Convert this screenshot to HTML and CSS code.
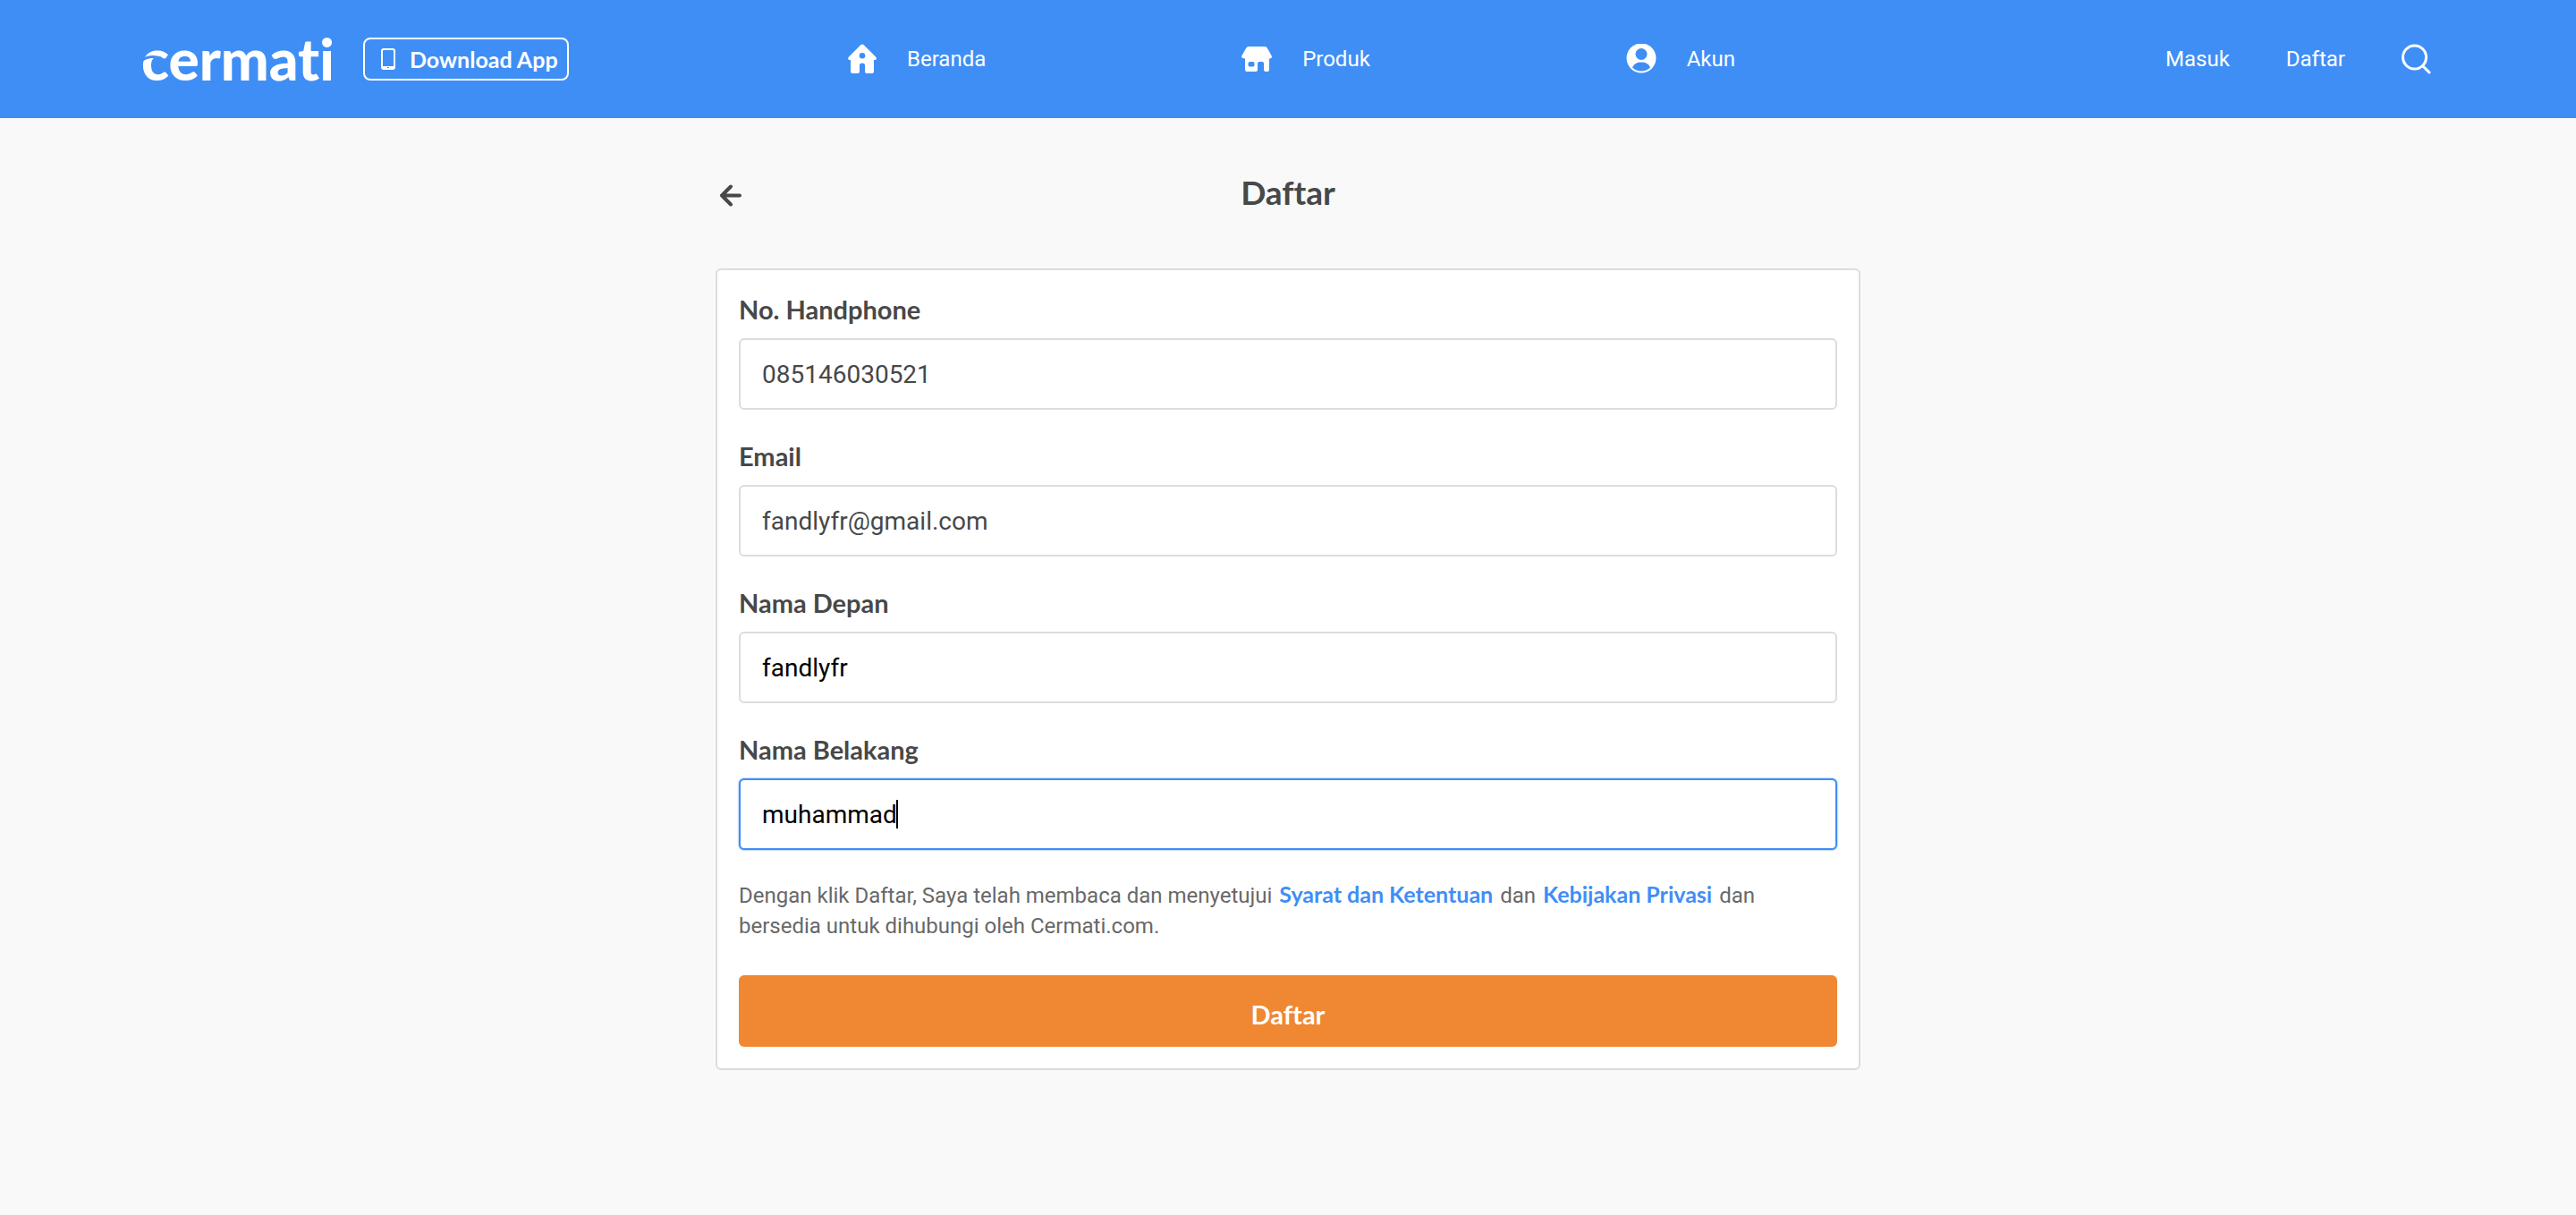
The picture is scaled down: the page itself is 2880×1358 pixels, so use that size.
FILE: index.html
```html
<!DOCTYPE html>
<html lang="id">
<head>
<meta charset="utf-8">
<title>Daftar - Cermati</title>
<link rel="stylesheet" href="styles.css">
</head>
<body>
<header class="header">
  <div class="brand">
    <a class="logo" href="#" aria-label="cermati">
      <svg width="220" height="88" viewBox="0 0 220 88">
        <text class="logo-text" x="0" y="68">cermati</text>
        <path d="M0 46Q9 39 22 43" fill="none" stroke="#3f8ef6" stroke-width="3"/>
      </svg>
    </a>
    <a class="download" href="#">
      <svg width="16" height="24" viewBox="0 0 16 24"><rect x="1" y="1" width="14" height="22" rx="2" fill="none" stroke="#fff" stroke-width="2"/><path d="M1 20h14v2H1z" fill="#fff"/><path d="M7 21h2v1H7z" fill="#3f8ef6"/></svg>
      Download App
    </a>
  </div>
  <nav class="nav">
    <a class="nav-item" href="#">
      <svg width="32" height="34" viewBox="0 0 32 34"><path fill="#fff" fill-rule="evenodd" d="M14 1.500Q16-.3 18 1.500L31 14.500Q33 17 30.500 18H29V31Q29 33 27 33H21Q19 33 19 31V24Q19 21.500 16 21.500T13 24V31Q13 33 11 33H5Q3 33 3 31V18H1.500Q-1 17 1 14.500ZM16 10a3.300 3.300 0 1 0 0 6.600a3.300 3.300 0 0 0 0-6.600Z"/></svg>
      Beranda
    </a>
    <a class="nav-item" href="#">
      <svg width="34" height="28" viewBox="0 0 34 28"><path fill="#fff" fill-rule="evenodd" d="M8 0H26Q28 0 29 2L34 11Q34 13.500 31 13.500V26Q31 28 29 28H27Q25 28 25 26V19Q25 17 23 17H20Q18 17 18 19V26Q18 28 16 28H6Q4 28 4 26V13.500Q0 13.500 0 11L5 2Q6 0 8 0ZM9.500 17Q7.500 17 7.500 19V21Q7.500 22.500 9.500 22.500H12.500Q14.500 22.500 14.500 21V19Q14.500 17 12.500 17Z"/></svg>
      Produk
    </a>
    <a class="nav-item" href="#">
      <svg width="34" height="34" viewBox="0 0 34 34"><circle cx="17" cy="16" r="16.500" fill="#fff"/><circle cx="17" cy="11.500" r="6.500" fill="#3f8ef6"/><path d="M7 26.500a10.500 8.500 0 0 1 20 0a14.500 14.500 0 0 1-20 0Z" fill="#3f8ef6"/></svg>
      Akun
    </a>
  </nav>
  <div class="account">
    <a href="#">Masuk</a>
    <a href="#">Daftar</a>
    <button class="search" type="button" aria-label="Cari">
      <svg width="33" height="34" viewBox="0 0 33 34" fill="none" stroke="#fff" stroke-width="3"><circle cx="14.500" cy="15" r="13"/><path d="M24.500 25.500l6.500 6.500" stroke-linecap="round"/></svg>
    </button>
  </div>
</header>
<main class="page">
  <div class="title-row">
    <a class="back" href="#" aria-label="Kembali">
      <svg width="26" height="26" viewBox="0 0 26 26" fill="none" stroke="#484848" stroke-width="4" stroke-linecap="round" stroke-linejoin="round"><path d="M13 3.500L3 13.500L13 23.500M3 13.500H23"/></svg>
    </a>
    <h1 class="title">Daftar</h1>
  </div>
  <form class="card">
    <div class="field">
      <label for="phone">No. Handphone</label>
      <input class="prefilled" id="phone" type="tel" value="085146030521">
    </div>
    <div class="field">
      <label for="email">Email</label>
      <input class="prefilled" id="email" type="email" value="fandlyfr@gmail.com">
    </div>
    <div class="field">
      <label for="first">Nama Depan</label>
      <input id="first" type="text" value="fandlyfr">
    </div>
    <div class="field">
      <label for="last">Nama Belakang</label>
      <div class="control">
        <input class="active" id="last" type="text" value="muhammad">
        <span class="caret"></span>
      </div>
    </div>
    <p class="terms">Dengan klik Daftar, Saya telah membaca dan menyetujui <a href="#">Syarat dan Ketentuan</a> dan <a href="#">Kebijakan Privasi</a> dan bersedia untuk dihubungi oleh Cermati.com.</p>
    <button class="submit" type="button">Daftar</button>
  </form>
</main>
</body>
</html>
```
FILE: styles.css
```css
* { box-sizing: border-box; }
body {
  margin: 0;
  background: #f9f9f9;
  color: #484848;
  font-family: Roboto, "Liberation Sans", sans-serif;
  font-size: 24px;
  font-variant-ligatures: none;
}
a { color: inherit; text-decoration: none; }
svg { display: block; flex: none; }
.header {
  display: grid;
  grid-template-columns: 1fr 992px 1fr;
  align-items: center;
  height: 132px;
  padding: 0 150px 0 158px;
  background: #3f8ef6;
  color: #fff;
}
.brand { display: flex; align-items: center; gap: 28px; }
.logo-text {
  font-family: Lato, sans-serif;
  font-weight: 900;
  font-size: 64px;
  fill: #fff;
}
.download {
  display: flex;
  align-items: center;
  gap: 16px;
  height: 48px;
  padding: 0 10px 0 18px;
  border: 2px solid #fff;
  border-radius: 8px;
  font-family: Lato, sans-serif;
  font-size: 25px;
  font-weight: 700;
  white-space: nowrap;
}
.nav { display: flex; justify-content: space-between; }
.nav-item { display: flex; align-items: center; gap: 34px; }
.account { display: flex; justify-content: flex-end; align-items: center; gap: 63px; }
.search { padding: 0 12px 0 0; border: 0; background: none; }
.page { max-width: 1280px; margin: 0 auto; padding: 60px 0 160px; }
.title-row {
  display: grid;
  grid-template-columns: 32px 1fr 32px;
  align-items: center;
  height: 52px;
  margin-bottom: 56px;
}
.back { padding-left: 4px; }
.title {
  align-self: start;
  margin: 0;
  text-align: center;
  font-family: Lato, sans-serif;
  font-size: 37px;
  font-weight: 700;
  line-height: 46px;
}
.card { padding: 24px; background: #fff; border: 2px solid #dcdcdc; border-radius: 6px; }
.field { display: flex; flex-direction: column; gap: 12px; margin-bottom: 32px; }
.field label { font: 700 29px/40px Lato, sans-serif; }
.field input {
  width: 100%;
  height: 80px;
  padding: 0 24px;
  border: 2px solid #dcdcdc;
  border-radius: 6px;
  background: #fff;
  color: #000;
  font: 28px/40px Roboto, sans-serif;
  outline: none;
}
.field .prefilled { color: #484848; }
.field .active { border-color: #3f8ef6; box-shadow: 0 0 2px #3f8ef6; }
.control { display: flex; position: relative; }
.caret { position: absolute; left: 176px; top: 24px; width: 2px; height: 32px; background: #000; }
.terms { margin: 0 0 38px; padding-top: 2px; line-height: 34px; color: #686868; }
.terms a { margin: 0 2px; color: #3f8ef6; font-family: Lato, sans-serif; font-size: 25px; font-weight: 700; line-height: 24px; }
.submit {
  width: 100%;
  height: 80px;
  padding: 8px 0 0;
  border: 0;
  border-radius: 6px;
  background: #f08833;
  color: #fff;
  font-family: Lato, sans-serif;
  font-size: 29px;
  font-weight: 700;
  line-height: 40px;
  font-variant-ligatures: none;
}
```
